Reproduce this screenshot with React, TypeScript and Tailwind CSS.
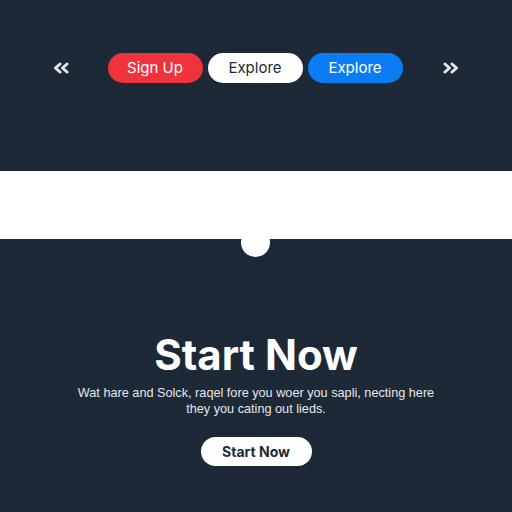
import React from "react";

const Chevrons = ({ dir }: { dir: "left" | "right" }) => (
  <svg
    width="16"
    height="12"
    viewBox="0 0 16 12"
    fill="none"
    stroke="#e5e7eb"
    strokeWidth="3"
    strokeLinecap="round"
    strokeLinejoin="round"
    className={dir === "right" ? "" : "rotate-180"}
  >
    <path d="M2 2l4.5 4-4.5 4" />
    <path d="M9 2l4.5 4-4.5 4" />
  </svg>
);

const NavButton = ({ label, className }: { label: string; className: string }) => (
  <button
    className={`h-[30px] w-[95px] rounded-full text-[15px] flex items-center justify-center ${className}`}
  >
    {label}
  </button>
);

export default function App() {
  return (
    <div
      className="w-full h-[512px] bg-[#1e2938] flex flex-col overflow-hidden"
      style={{ fontFamily: "Inter, 'Noto Sans', sans-serif" }}
    >
      {/* top nav */}
      <div className="mt-[53px] h-[30px] px-[53px] flex items-center justify-between">
        <Chevrons dir="left" />
        <div className="-ml-[2px] flex gap-[5px]">
          <NavButton label="Sign Up" className="bg-[#f0323c] text-white" />
          <NavButton label="Explore" className="bg-white text-[#1e2938]" />
          <NavButton label="Explore" className="bg-[#0a7cf4] text-white" />
        </div>
        <Chevrons dir="right" />
      </div>

      {/* white band with knob */}
      <div className="relative mt-[88px] h-[68px] bg-white">
        <div className="absolute left-[241px] top-[57px] h-[29px] w-[29px] rounded-full bg-white" />
      </div>

      {/* hero */}
      <h1 className="mt-[95px] text-center text-[42px] leading-none font-bold text-white">
        Start Now
      </h1>
      <p
        className="mt-[9px] text-center text-[12.7px] leading-[16px] text-[#e5e7eb]"
        style={{ fontFamily: "'Liberation Sans', Arial, sans-serif" }}
      >
        Wat hare and Solck, raqel fore you woer you sapli, necting here
        <br />
        they you cating out lieds.
      </p>
      <div className="mt-[20px] flex justify-center">
        <button className="h-[29px] w-[111px] rounded-full bg-white text-[14px] font-bold text-[#1e2938]">
          Start Now
        </button>
      </div>
    </div>
  );
}
